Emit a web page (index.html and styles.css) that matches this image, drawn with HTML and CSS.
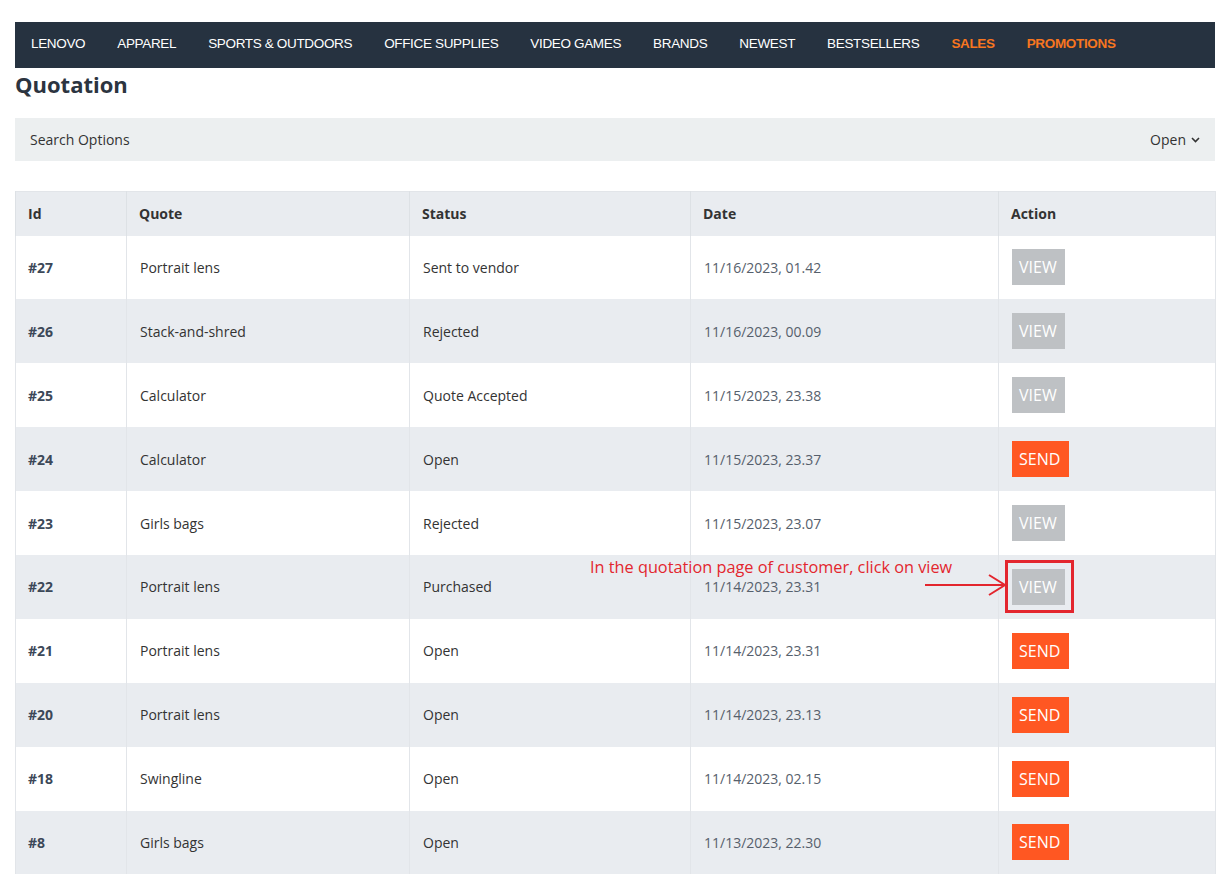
FILE: index.html
```html
<!DOCTYPE html>
<html lang="en">
<head>
<meta charset="utf-8">
<title>Quotation</title>
<link rel="stylesheet" href="styles.css">
</head>
<body>
<div class="page">
  <nav class="nav">
    <a class="nav-item">LENOVO</a>
    <a class="nav-item">APPAREL</a>
    <a class="nav-item">SPORTS &amp; OUTDOORS</a>
    <a class="nav-item">OFFICE SUPPLIES</a>
    <a class="nav-item">VIDEO GAMES</a>
    <a class="nav-item">BRANDS</a>
    <a class="nav-item">NEWEST</a>
    <a class="nav-item">BESTSELLERS</a>
    <a class="nav-item hot">SALES</a>
    <a class="nav-item hot">PROMOTIONS</a>
  </nav>
  <h1 class="title">Quotation</h1>
  <div class="search-bar">
    <span>Search Options</span>
    <span class="open">Open <svg class="chev" width="9" height="6" viewBox="0 0 9 6"><path d="M1 1l3.5 3.5L8 1" fill="none" stroke="#333" stroke-width="1.6"/></svg></span>
  </div>
  <div class="table-wrap">
    <table class="qtable">
      <colgroup>
        <col class="c1"><col class="c2"><col class="c3"><col class="c4"><col class="c5">
      </colgroup>
      <thead>
        <tr><th>Id</th><th>Quote</th><th>Status</th><th>Date</th><th>Action</th></tr>
      </thead>
      <tbody>
        <tr><td class="id">#27</td><td>Portrait lens</td><td>Sent to vendor</td><td class="date">11/16/2023, 01.42</td><td><span class="btn view">VIEW</span></td></tr>
        <tr><td class="id">#26</td><td>Stack-and-shred</td><td>Rejected</td><td class="date">11/16/2023, 00.09</td><td><span class="btn view">VIEW</span></td></tr>
        <tr><td class="id">#25</td><td>Calculator</td><td>Quote Accepted</td><td class="date">11/15/2023, 23.38</td><td><span class="btn view">VIEW</span></td></tr>
        <tr><td class="id">#24</td><td>Calculator</td><td>Open</td><td class="date">11/15/2023, 23.37</td><td><span class="btn send">SEND</span></td></tr>
        <tr><td class="id">#23</td><td>Girls bags</td><td>Rejected</td><td class="date">11/15/2023, 23.07</td><td><span class="btn view">VIEW</span></td></tr>
        <tr><td class="id">#22</td><td>Portrait lens</td><td>Purchased</td><td class="date">11/14/2023, 23.31</td><td><span class="btn view">VIEW</span></td></tr>
        <tr><td class="id">#21</td><td>Portrait lens</td><td>Open</td><td class="date">11/14/2023, 23.31</td><td><span class="btn send">SEND</span></td></tr>
        <tr><td class="id">#20</td><td>Portrait lens</td><td>Open</td><td class="date">11/14/2023, 23.13</td><td><span class="btn send">SEND</span></td></tr>
        <tr><td class="id">#18</td><td>Swingline</td><td>Open</td><td class="date">11/14/2023, 02.15</td><td><span class="btn send">SEND</span></td></tr>
        <tr><td class="id">#8</td><td>Girls bags</td><td>Open</td><td class="date">11/13/2023, 22.30</td><td><span class="btn send">SEND</span></td></tr>
      </tbody>
    </table>
    <div class="note">In the quotation page of customer, click on view</div>
    <svg class="arrow" width="84" height="26" viewBox="0 0 84 26"><path d="M0 13H80M64 3L80 13L64 23" fill="none" stroke="#e3262e" stroke-width="2"/></svg>
    <div class="highlight"></div>
  </div>
</div>
</body>
</html>
```
FILE: styles.css
```css
* { box-sizing: border-box; }
body {
  margin: 0;
  background: #fff;
  font-family: "Open Sans", "Liberation Sans", sans-serif;
  color: #333;
}
.page {
  width: 1228px;
  padding: 22px 13px 0 15px;
}
.nav {
  display: flex;
  align-items: center;
  height: 46px;
  background: #263240;
  padding-bottom: 4px;
}
.nav-item {
  font-family: "Liberation Sans", Arial, sans-serif;
  font-size: 13.5px;
  color: #fff;
  padding: 0 16px;
  letter-spacing: -0.34px;
  white-space: nowrap;
}
.nav-item.hot {
  color: #f7761f;
  font-weight: bold;
}
.title {
  margin: 0;
  height: 50px;
  padding-top: 2px;
  font-size: 22px;
  font-weight: 700;
  color: #2c3440;
  line-height: 28px;
}
.search-bar {
  display: flex;
  justify-content: space-between;
  align-items: center;
  height: 43px;
  background: #eceff0;
  padding: 0 15px;
  font-size: 14px;
  color: #333;
}
.open {
  display: flex;
  align-items: center;
  gap: 5px;
}
.chev { margin-top: 1px; }
.table-wrap {
  position: relative;
  margin-top: 30px;
}
.qtable {
  width: 1200px;
  border-collapse: collapse;
  table-layout: fixed;
  font-size: 14px;
  border: 1px solid #e2e5e9;
}
.c1 { width: 111px; }
.c2 { width: 283px; }
.c3 { width: 281px; }
.c4 { width: 308px; }
.c5 { width: 217px; }
.qtable th {
  height: 44px;
  background: #e9ecf0;
  text-align: left;
  font-weight: 700;
  color: #333;
  padding: 0 12px 1px;
  border-left: 1px solid #dde1e5;
}
.qtable td {
  height: 63.9px;
  padding: 0 13px;
  color: #333;
  border-left: 1px solid #e2e5e9;
}
.qtable th:first-child { padding-left: 12px; }
.qtable td:first-child { padding-left: 12px; }
.qtable tbody tr:nth-child(even) td { background: #e9ecf0; }
.qtable td.id { font-weight: 700; color: #3c4858; }
.qtable td.date { color: #56606c; }
.btn {
  display: inline-block;
  height: 36px;
  line-height: 36px;
  padding: 0 7px;
  font-size: 16px;
  color: #fff;
}
.btn.view { background: #bec1c4; width: 53px; }
.btn.send { background: #ff5722; width: 57px; }
.note {
  position: absolute;
  left: 575px;
  top: 365px;
  font-size: 16.3px;
  color: #e3262e;
  white-space: nowrap;
}
.arrow {
  position: absolute;
  left: 910px;
  top: 381px;
}
.highlight {
  position: absolute;
  left: 990px;
  top: 369px;
  width: 69px;
  height: 53px;
  border: 3px solid #e3262e;
}
```
